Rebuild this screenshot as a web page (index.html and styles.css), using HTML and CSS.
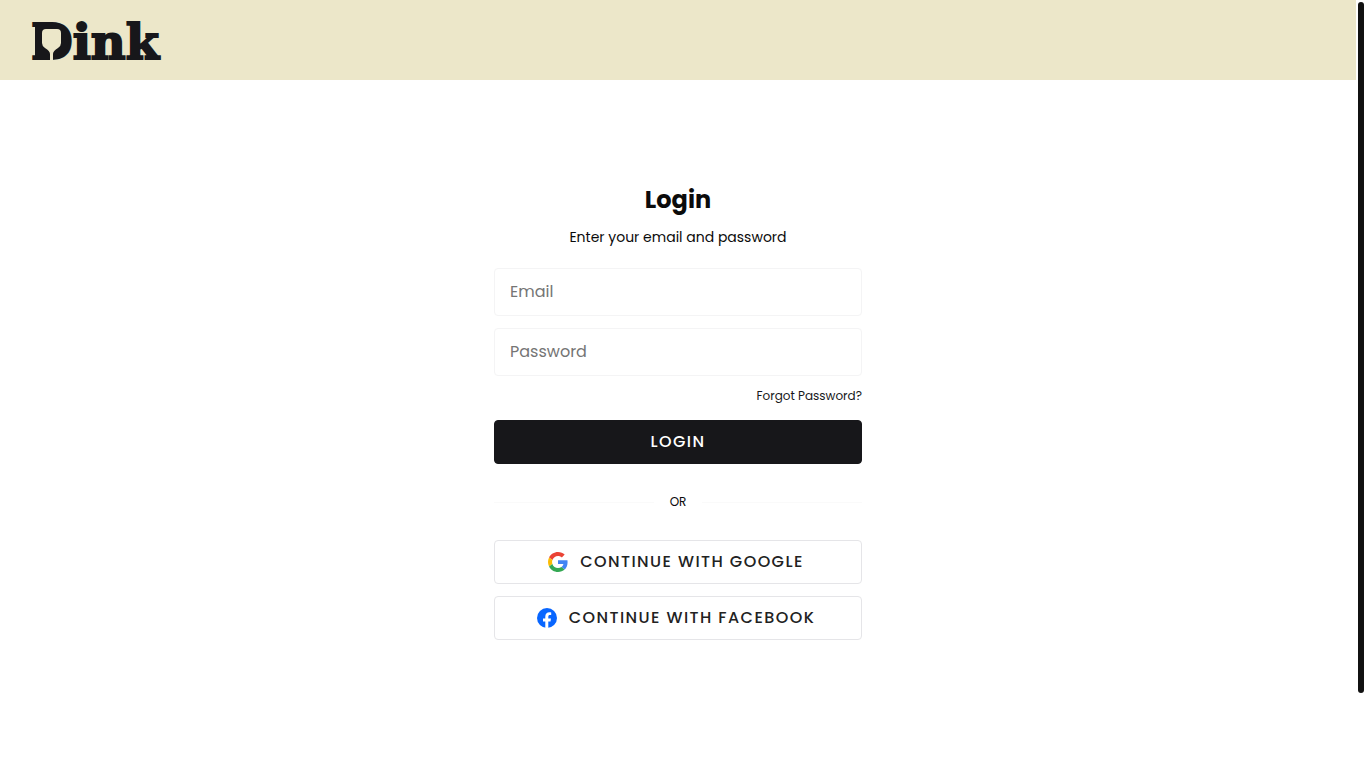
FILE: index.html
```
<!DOCTYPE html>
<html lang="en">
<head>
    <meta charset="UTF-8">
    <meta name="viewport" content="width=device-width, initial-scale=1.0">
    <title>Login | Dink</title>
    <link rel="stylesheet" href="styles.css">
</head>
<body>
    <div class="page">
        <header class="header">
            <a href="#" class="logo" aria-label="Dink">
                <svg width="132" height="40" viewBox="0 0 132 40">
                    <text class="logo-text" x="-1" y="39">Dink</text>
                    <!-- bottle cut out of the D -->
                    <path class="logo-dark" d="M3 3h21q13 4 13 16T22 38H3z"/>
                    <path class="logo-bottle" d="M14 9h11q4 0 4 4v10q0 3-3 5-5 3-5 6v7h-3v-7q0-3-5-6-3-2-3-5V13q0-4 4-4z"/>
                </svg>
            </a>
        </header>

        <main class="main">
            <form class="login-form">
                <h1 class="title">Login</h1>
                <p class="subtitle">Enter your email and password</p>

                <input type="email" class="field" placeholder="Email" aria-label="Email">
                <input type="password" class="field" placeholder="Password" aria-label="Password">
                <a href="#" class="forgot">Forgot Password?</a>
                <button type="submit" class="btn btn-dark"><span>LOGIN</span></button>

                <div class="divider"><span>OR</span></div>

                <button type="button" class="btn btn-social">
                    <svg width="20" height="20" viewBox="0 0 48 48" aria-hidden="true">
                        <path fill="#EA4335" d="M24 9.5c3.54 0 6.71 1.22 9.21 3.6l6.85-6.85C35.9 2.38 30.47 0 24 0 14.62 0 6.51 5.38 2.56 13.22l7.98 6.19C12.43 13.72 17.74 9.5 24 9.5z"/>
                        <path fill="#4285F4" d="M46.98 24.55c0-1.57-.15-3.09-.38-4.55H24v9.02h12.94c-.58 2.96-2.26 5.48-4.78 7.18l7.73 6c4.51-4.18 7.09-10.36 7.09-17.65z"/>
                        <path fill="#FBBC05" d="M10.53 28.59c-.48-1.45-.76-2.99-.76-4.59s.27-3.14.76-4.59l-7.98-6.19C.92 16.46 0 20.12 0 24c0 3.88.92 7.54 2.56 10.78l7.97-6.19z"/>
                        <path fill="#34A853" d="M24 48c6.48 0 11.93-2.13 15.89-5.81l-7.73-6c-2.15 1.45-4.92 2.3-8.16 2.3-6.26 0-11.57-4.22-13.47-9.91l-7.98 6.19C6.51 42.62 14.62 48 24 48z"/>
                    </svg>
                    <span>CONTINUE WITH GOOGLE</span>
                </button>
                <button type="button" class="btn btn-social">
                    <svg width="20" height="20" viewBox="0 0 20 20" aria-hidden="true">
                        <circle cx="10" cy="10" r="10" fill="#0866FF"/>
                        <path fill="#fff" d="M8.3 20v-6.6H6v-3h2.3V8.8c0-3 1.4-4.6 4.2-4.6.6 0 1.3.1 1.7.2V7c-.3 0-.7-.1-1.1-.1-1.4 0-1.8.6-1.8 1.9v1.6H14l-.5 3h-2.2V20z"/>
                    </svg>
                    <span>CONTINUE WITH FACEBOOK</span>
                </button>
            </form>
        </main>
    </div>

    <div class="scrollbar" aria-hidden="true">
        <div class="scrollbar-thumb"></div>
    </div>
</body>
</html>
```
FILE: styles.css
```
* {
    margin: 0;
    padding: 0;
    box-sizing: border-box;
}

body {
    display: flex;
    min-height: 100vh;
    font-family: 'Poppins', 'Inter', sans-serif;
    background-color: #fff;
    color: #0b0b0b;
}

.page {
    flex: 1;
}

.scrollbar {
    width: 10px;
    padding: 2px;
}

.scrollbar-thumb {
    height: 90vh;
    border-radius: 3px;
    background-color: #111;
}

.header {
    display: flex;
    align-items: center;
    height: 80px;
    padding: 0 32px;
    background-color: #ece7c9;
}

.logo {
    display: block;
    height: 40px;
}

.logo svg {
    display: block;
    overflow: visible;
}

.logo-text {
    font-family: 'DejaVu Serif', serif;
    font-size: 48px;
    font-weight: bold;
    fill: #17171a;
    stroke: #17171a;
    stroke-width: 2;
}

.logo-dark {
    fill: #17171a;
}

.logo-bottle {
    fill: #ece7c9;
}

.main {
    padding: 100px 16px;
}

.login-form {
    display: flex;
    flex-direction: column;
    gap: 12px;
    width: 100%;
    max-width: 368px;
    margin: 0 auto;
}

.title {
    font-size: 24px;
    font-weight: 700;
    line-height: 40px;
    text-align: center;
}

.subtitle {
    margin: -4px 0 10px;
    font-size: 14px;
    line-height: 18px;
    text-align: center;
}

.field {
    width: 100%;
    height: 48px;
    padding: 0 15px 2px;
    border: 1px solid #f4f4f5;
    border-radius: 4px;
    background-color: #fff;
    font-family: inherit;
    font-size: 16px;
}

.field::placeholder {
    color: #757575;
}

.forgot {
    align-self: flex-end;
    margin-bottom: 4px;
    color: #17171a;
    font-size: 12px;
    line-height: 16px;
    text-decoration: none;
}

.btn {
    display: flex;
    align-items: center;
    justify-content: center;
    gap: 12px;
    height: 44px;
    border: 1px solid #17171a;
    border-radius: 4px;
    font-family: inherit;
    font-size: 16px;
    font-weight: 500;
    letter-spacing: 0.09em;
    cursor: pointer;
}

.btn span {
    padding-bottom: 2px;
}

.btn-dark {
    background-color: #17171a;
    color: #fff;
}

.btn-social {
    padding-right: 4px;
    border-color: #e5e5e8;
    background-color: #fff;
    color: #222;
}

.divider {
    display: flex;
    align-items: center;
    gap: 16px;
    margin: 16px 0;
    font-size: 12px;
    line-height: 20px;
}

.divider::before,
.divider::after {
    content: '';
    flex: 1;
    height: 1px;
    background-color: #fafafa;
}
```
